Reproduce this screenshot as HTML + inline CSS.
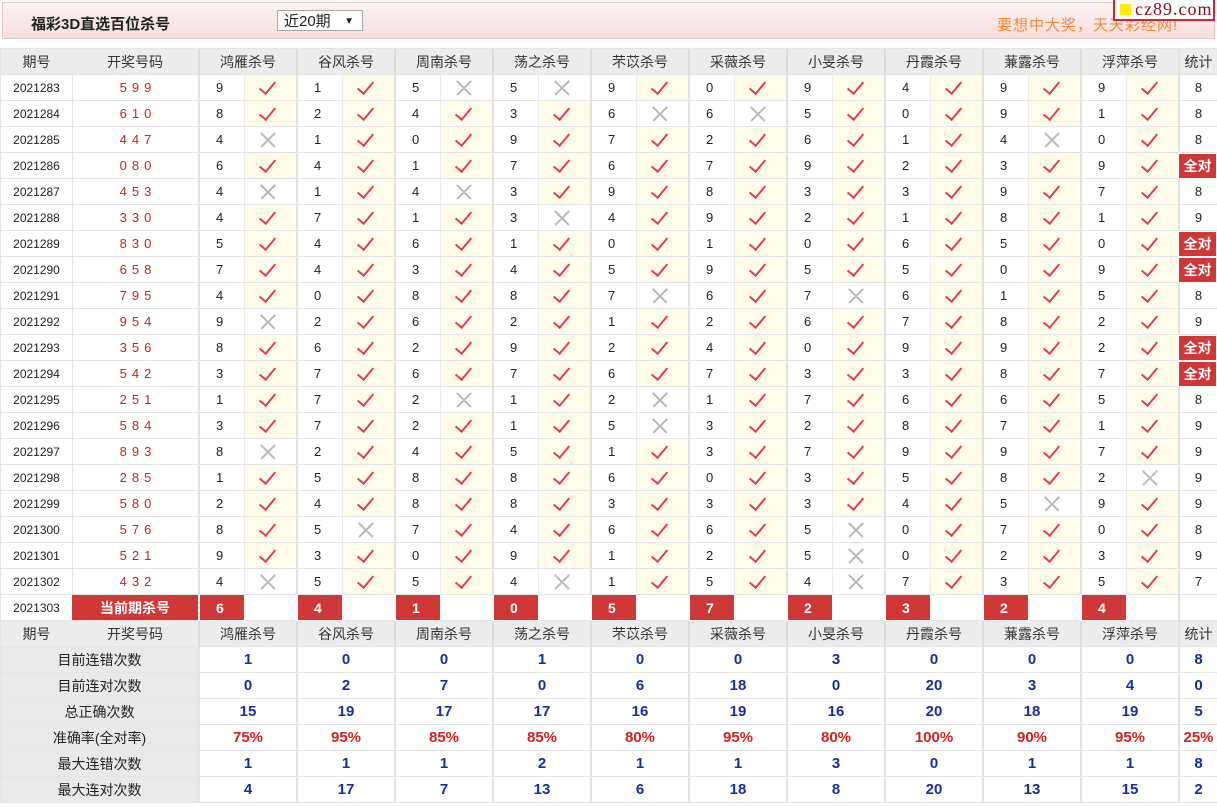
<!DOCTYPE html>
<html><head><meta charset="utf-8">
<style>
*{margin:0;padding:0}
body{width:1217px;height:807px;background:#fff;position:relative;overflow:hidden;font-family:"Liberation Sans","Noto Sans CJK SC",sans-serif;color:#222}
.top{position:absolute;left:2px;top:2px;width:1211px;height:35px;border:1px solid #e3c8c8;background:linear-gradient(#fdf2f2,#f5dede)}
.title{position:absolute;left:28px;top:10px;font-size:15px;font-weight:bold;color:#222}
.sel{position:absolute;left:274px;top:7px;width:86px;height:21px;border:1px solid #aaa;background:#fff;font-size:15px;line-height:21px;padding-left:6px;box-sizing:border-box}
.sel i{position:absolute;right:8px;top:0;font-style:normal;font-size:10px}
.slogan{position:absolute;left:994px;top:11px;font-size:15px;color:#ee8a3c;letter-spacing:1px}
.logo{position:absolute;left:1113px;top:0;width:102px;height:21px;background:#fff;border:2px solid #c9283a;border-top:0;box-sizing:border-box;font-family:"Liberation Serif",serif;font-size:18px;color:#8b1020;line-height:19px;padding-left:20px;letter-spacing:1px}
.logo b{position:absolute;left:5px;top:4px;width:11px;height:11px;background:#ffee00}
.t{position:absolute;left:0;top:48px;width:1217px;border-top:1px solid #e4e4e4}
.r{display:grid;grid-template-columns:72px 126px repeat(10,46px 52px) 39px;height:26px}
.r>span{box-sizing:border-box;border-bottom:1px solid #e4e4e4;display:flex;align-items:center;justify-content:center;height:26px;font-size:13px;position:relative}
.r>span:first-child{font-size:12px;border-left:1px solid #e4e4e4}
.k{color:#c0242a;letter-spacing:5px;padding-left:5px;border-left:1px solid #e4e4e4}
.n{border-left:2px solid #e2e2dc;justify-content:flex-start!important;padding-left:16px}
.c,.x{border-left:1px solid #ebebeb}
.c{background:#fffcea}
.c::after{content:"";position:absolute;left:18px;top:3px;width:7px;height:14px;border-right:2px solid #e43a52;border-bottom:2px solid #e43a52;transform:rotate(40deg)}
.x::before,.x::after{content:"";position:absolute;left:13px;top:12px;width:20px;height:1.5px;background:#bbb;transform:rotate(45deg)}
.x::after{transform:rotate(-45deg)}
.s{border-left:2px solid #e2e2dc}
.q{background:#d03737;color:#fff;font-weight:bold;font-size:14px!important;border:1px solid #fff!important}
.h>span{background:#ececec;font-size:14px!important;color:#333}
.g{grid-column:span 2;border-left:2px solid #dcdcd6}
.cur{background:#d03737;color:#fff;font-weight:bold;font-size:14px!important}
.cn{background:#d03737;color:#fff;font-weight:bold;font-size:14px!important;border-left:2px solid #fff;justify-content:flex-start!important;padding-left:16px;border-bottom:1px solid #fff!important}
.lb{grid-column:span 2;background:#e9e9e9;font-size:14px!important;color:#222}
.v{grid-column:span 2;border-left:2px solid #e2e2dc;color:#1b2ca3;font-weight:bold;font-size:15px!important}
.sv{border-left:2px solid #e2e2dc;color:#1b2ca3;font-weight:bold;font-size:15px!important}
.p{color:#d42020!important}
</style></head><body>
<div class="top"><div class="title">福彩3D直选百位杀号</div><div class="sel">近20期<i>▼</i></div><div class="slogan">要想中大奖，天天彩经网!</div></div>
<div class="logo"><b></b>cz89.com</div>
<div class="t">
<div class="r h"><span>期号</span><span>开奖号码</span><span class="g">鸿雁杀号</span><span class="g">谷风杀号</span><span class="g">周南杀号</span><span class="g">荡之杀号</span><span class="g">芣苡杀号</span><span class="g">采薇杀号</span><span class="g">小旻杀号</span><span class="g">丹霞杀号</span><span class="g">蒹露杀号</span><span class="g">浮萍杀号</span><span class="s">统计</span></div>

<div class="r"><span>2021283</span><span class="k">599</span><span class="n">9</span><span class="c"></span><span class="n">1</span><span class="c"></span><span class="n">5</span><span class="x"></span><span class="n">5</span><span class="x"></span><span class="n">9</span><span class="c"></span><span class="n">0</span><span class="c"></span><span class="n">9</span><span class="c"></span><span class="n">4</span><span class="c"></span><span class="n">9</span><span class="c"></span><span class="n">9</span><span class="c"></span><span class="s">8</span></div>
<div class="r"><span>2021284</span><span class="k">610</span><span class="n">8</span><span class="c"></span><span class="n">2</span><span class="c"></span><span class="n">4</span><span class="c"></span><span class="n">3</span><span class="c"></span><span class="n">6</span><span class="x"></span><span class="n">6</span><span class="x"></span><span class="n">5</span><span class="c"></span><span class="n">0</span><span class="c"></span><span class="n">9</span><span class="c"></span><span class="n">1</span><span class="c"></span><span class="s">8</span></div>
<div class="r"><span>2021285</span><span class="k">447</span><span class="n">4</span><span class="x"></span><span class="n">1</span><span class="c"></span><span class="n">0</span><span class="c"></span><span class="n">9</span><span class="c"></span><span class="n">7</span><span class="c"></span><span class="n">2</span><span class="c"></span><span class="n">6</span><span class="c"></span><span class="n">1</span><span class="c"></span><span class="n">4</span><span class="x"></span><span class="n">0</span><span class="c"></span><span class="s">8</span></div>
<div class="r"><span>2021286</span><span class="k">080</span><span class="n">6</span><span class="c"></span><span class="n">4</span><span class="c"></span><span class="n">1</span><span class="c"></span><span class="n">7</span><span class="c"></span><span class="n">6</span><span class="c"></span><span class="n">7</span><span class="c"></span><span class="n">9</span><span class="c"></span><span class="n">2</span><span class="c"></span><span class="n">3</span><span class="c"></span><span class="n">9</span><span class="c"></span><span class="s q">全对</span></div>
<div class="r"><span>2021287</span><span class="k">453</span><span class="n">4</span><span class="x"></span><span class="n">1</span><span class="c"></span><span class="n">4</span><span class="x"></span><span class="n">3</span><span class="c"></span><span class="n">9</span><span class="c"></span><span class="n">8</span><span class="c"></span><span class="n">3</span><span class="c"></span><span class="n">3</span><span class="c"></span><span class="n">9</span><span class="c"></span><span class="n">7</span><span class="c"></span><span class="s">8</span></div>
<div class="r"><span>2021288</span><span class="k">330</span><span class="n">4</span><span class="c"></span><span class="n">7</span><span class="c"></span><span class="n">1</span><span class="c"></span><span class="n">3</span><span class="x"></span><span class="n">4</span><span class="c"></span><span class="n">9</span><span class="c"></span><span class="n">2</span><span class="c"></span><span class="n">1</span><span class="c"></span><span class="n">8</span><span class="c"></span><span class="n">1</span><span class="c"></span><span class="s">9</span></div>
<div class="r"><span>2021289</span><span class="k">830</span><span class="n">5</span><span class="c"></span><span class="n">4</span><span class="c"></span><span class="n">6</span><span class="c"></span><span class="n">1</span><span class="c"></span><span class="n">0</span><span class="c"></span><span class="n">1</span><span class="c"></span><span class="n">0</span><span class="c"></span><span class="n">6</span><span class="c"></span><span class="n">5</span><span class="c"></span><span class="n">0</span><span class="c"></span><span class="s q">全对</span></div>
<div class="r"><span>2021290</span><span class="k">658</span><span class="n">7</span><span class="c"></span><span class="n">4</span><span class="c"></span><span class="n">3</span><span class="c"></span><span class="n">4</span><span class="c"></span><span class="n">5</span><span class="c"></span><span class="n">9</span><span class="c"></span><span class="n">5</span><span class="c"></span><span class="n">5</span><span class="c"></span><span class="n">0</span><span class="c"></span><span class="n">9</span><span class="c"></span><span class="s q">全对</span></div>
<div class="r"><span>2021291</span><span class="k">795</span><span class="n">4</span><span class="c"></span><span class="n">0</span><span class="c"></span><span class="n">8</span><span class="c"></span><span class="n">8</span><span class="c"></span><span class="n">7</span><span class="x"></span><span class="n">6</span><span class="c"></span><span class="n">7</span><span class="x"></span><span class="n">6</span><span class="c"></span><span class="n">1</span><span class="c"></span><span class="n">5</span><span class="c"></span><span class="s">8</span></div>
<div class="r"><span>2021292</span><span class="k">954</span><span class="n">9</span><span class="x"></span><span class="n">2</span><span class="c"></span><span class="n">6</span><span class="c"></span><span class="n">2</span><span class="c"></span><span class="n">1</span><span class="c"></span><span class="n">2</span><span class="c"></span><span class="n">6</span><span class="c"></span><span class="n">7</span><span class="c"></span><span class="n">8</span><span class="c"></span><span class="n">2</span><span class="c"></span><span class="s">9</span></div>
<div class="r"><span>2021293</span><span class="k">356</span><span class="n">8</span><span class="c"></span><span class="n">6</span><span class="c"></span><span class="n">2</span><span class="c"></span><span class="n">9</span><span class="c"></span><span class="n">2</span><span class="c"></span><span class="n">4</span><span class="c"></span><span class="n">0</span><span class="c"></span><span class="n">9</span><span class="c"></span><span class="n">9</span><span class="c"></span><span class="n">2</span><span class="c"></span><span class="s q">全对</span></div>
<div class="r"><span>2021294</span><span class="k">542</span><span class="n">3</span><span class="c"></span><span class="n">7</span><span class="c"></span><span class="n">6</span><span class="c"></span><span class="n">7</span><span class="c"></span><span class="n">6</span><span class="c"></span><span class="n">7</span><span class="c"></span><span class="n">3</span><span class="c"></span><span class="n">3</span><span class="c"></span><span class="n">8</span><span class="c"></span><span class="n">7</span><span class="c"></span><span class="s q">全对</span></div>
<div class="r"><span>2021295</span><span class="k">251</span><span class="n">1</span><span class="c"></span><span class="n">7</span><span class="c"></span><span class="n">2</span><span class="x"></span><span class="n">1</span><span class="c"></span><span class="n">2</span><span class="x"></span><span class="n">1</span><span class="c"></span><span class="n">7</span><span class="c"></span><span class="n">6</span><span class="c"></span><span class="n">6</span><span class="c"></span><span class="n">5</span><span class="c"></span><span class="s">8</span></div>
<div class="r"><span>2021296</span><span class="k">584</span><span class="n">3</span><span class="c"></span><span class="n">7</span><span class="c"></span><span class="n">2</span><span class="c"></span><span class="n">1</span><span class="c"></span><span class="n">5</span><span class="x"></span><span class="n">3</span><span class="c"></span><span class="n">2</span><span class="c"></span><span class="n">8</span><span class="c"></span><span class="n">7</span><span class="c"></span><span class="n">1</span><span class="c"></span><span class="s">9</span></div>
<div class="r"><span>2021297</span><span class="k">893</span><span class="n">8</span><span class="x"></span><span class="n">2</span><span class="c"></span><span class="n">4</span><span class="c"></span><span class="n">5</span><span class="c"></span><span class="n">1</span><span class="c"></span><span class="n">3</span><span class="c"></span><span class="n">7</span><span class="c"></span><span class="n">9</span><span class="c"></span><span class="n">9</span><span class="c"></span><span class="n">7</span><span class="c"></span><span class="s">9</span></div>
<div class="r"><span>2021298</span><span class="k">285</span><span class="n">1</span><span class="c"></span><span class="n">5</span><span class="c"></span><span class="n">8</span><span class="c"></span><span class="n">8</span><span class="c"></span><span class="n">6</span><span class="c"></span><span class="n">0</span><span class="c"></span><span class="n">3</span><span class="c"></span><span class="n">5</span><span class="c"></span><span class="n">8</span><span class="c"></span><span class="n">2</span><span class="x"></span><span class="s">9</span></div>
<div class="r"><span>2021299</span><span class="k">580</span><span class="n">2</span><span class="c"></span><span class="n">4</span><span class="c"></span><span class="n">8</span><span class="c"></span><span class="n">8</span><span class="c"></span><span class="n">3</span><span class="c"></span><span class="n">3</span><span class="c"></span><span class="n">3</span><span class="c"></span><span class="n">4</span><span class="c"></span><span class="n">5</span><span class="x"></span><span class="n">9</span><span class="c"></span><span class="s">9</span></div>
<div class="r"><span>2021300</span><span class="k">576</span><span class="n">8</span><span class="c"></span><span class="n">5</span><span class="x"></span><span class="n">7</span><span class="c"></span><span class="n">4</span><span class="c"></span><span class="n">6</span><span class="c"></span><span class="n">6</span><span class="c"></span><span class="n">5</span><span class="x"></span><span class="n">0</span><span class="c"></span><span class="n">7</span><span class="c"></span><span class="n">0</span><span class="c"></span><span class="s">8</span></div>
<div class="r"><span>2021301</span><span class="k">521</span><span class="n">9</span><span class="c"></span><span class="n">3</span><span class="c"></span><span class="n">0</span><span class="c"></span><span class="n">9</span><span class="c"></span><span class="n">1</span><span class="c"></span><span class="n">2</span><span class="c"></span><span class="n">5</span><span class="x"></span><span class="n">0</span><span class="c"></span><span class="n">2</span><span class="c"></span><span class="n">3</span><span class="c"></span><span class="s">9</span></div>
<div class="r"><span>2021302</span><span class="k">432</span><span class="n">4</span><span class="x"></span><span class="n">5</span><span class="c"></span><span class="n">5</span><span class="c"></span><span class="n">4</span><span class="x"></span><span class="n">1</span><span class="c"></span><span class="n">5</span><span class="c"></span><span class="n">4</span><span class="x"></span><span class="n">7</span><span class="c"></span><span class="n">3</span><span class="c"></span><span class="n">5</span><span class="c"></span><span class="s">7</span></div>
<div class="r"><span>2021303</span><span class="cur">当前期杀号</span><span class="cn">6</span><span></span><span class="cn">4</span><span></span><span class="cn">1</span><span></span><span class="cn">0</span><span></span><span class="cn">5</span><span></span><span class="cn">7</span><span></span><span class="cn">2</span><span></span><span class="cn">3</span><span></span><span class="cn">2</span><span></span><span class="cn">4</span><span></span><span class="s"></span></div>

<div class="r h"><span>期号</span><span>开奖号码</span><span class="g">鸿雁杀号</span><span class="g">谷风杀号</span><span class="g">周南杀号</span><span class="g">荡之杀号</span><span class="g">芣苡杀号</span><span class="g">采薇杀号</span><span class="g">小旻杀号</span><span class="g">丹霞杀号</span><span class="g">蒹露杀号</span><span class="g">浮萍杀号</span><span class="s">统计</span></div>
<div class="r"><span class="lb">目前连错次数</span><span class="v">1</span><span class="v">0</span><span class="v">0</span><span class="v">1</span><span class="v">0</span><span class="v">0</span><span class="v">3</span><span class="v">0</span><span class="v">0</span><span class="v">0</span><span class="sv">8</span></div>
<div class="r"><span class="lb">目前连对次数</span><span class="v">0</span><span class="v">2</span><span class="v">7</span><span class="v">0</span><span class="v">6</span><span class="v">18</span><span class="v">0</span><span class="v">20</span><span class="v">3</span><span class="v">4</span><span class="sv">0</span></div>
<div class="r"><span class="lb">总正确次数</span><span class="v">15</span><span class="v">19</span><span class="v">17</span><span class="v">17</span><span class="v">16</span><span class="v">19</span><span class="v">16</span><span class="v">20</span><span class="v">18</span><span class="v">19</span><span class="sv">5</span></div>
<div class="r"><span class="lb">准确率(全对率)</span><span class="v p">75%</span><span class="v p">95%</span><span class="v p">85%</span><span class="v p">85%</span><span class="v p">80%</span><span class="v p">95%</span><span class="v p">80%</span><span class="v p">100%</span><span class="v p">90%</span><span class="v p">95%</span><span class="sv p">25%</span></div>
<div class="r"><span class="lb">最大连错次数</span><span class="v">1</span><span class="v">1</span><span class="v">1</span><span class="v">2</span><span class="v">1</span><span class="v">1</span><span class="v">3</span><span class="v">0</span><span class="v">1</span><span class="v">1</span><span class="sv">8</span></div>
<div class="r"><span class="lb">最大连对次数</span><span class="v">4</span><span class="v">17</span><span class="v">7</span><span class="v">13</span><span class="v">6</span><span class="v">18</span><span class="v">8</span><span class="v">20</span><span class="v">13</span><span class="v">15</span><span class="sv">2</span></div>
</div>
</body></html>
